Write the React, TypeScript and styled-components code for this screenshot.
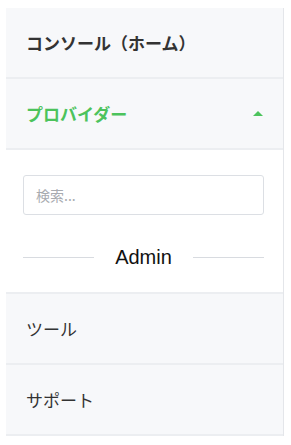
import styled, {createGlobalStyle} from 'styled-components'

const Global = createGlobalStyle`
  body {
    margin: 0;
    background: #fff;
    font-family: "Noto Sans", "Noto Sans CJK JP", sans-serif;
  }
`

const Panel = styled.nav`
  margin: 8px 0 0 6px;
  width: 277px;
  border-right: 1px solid #e4e6ea;
  background: #f7f8fa;
`

const Row = styled.div<{$active?: boolean; $bold?: boolean}>`
  height: 69px;
  display: flex;
  align-items: center;
  justify-content: space-between;
  padding: 0 20px;
  border-bottom: 2px solid #eceef1;
  font-size: 17px;
  font-weight: ${({$bold}) => ($bold ? 700 : 400)};
  color: ${({$active}) => ($active ? '#4cc35c' : '#333')};
  font-family: "Noto Sans CJK JP", sans-serif;
`

const Caret = styled.span`
  width: 0;
  height: 0;
  border-left: 5px solid transparent;
  border-right: 5px solid transparent;
  border-bottom: 5px solid #4cc35c;
`

const Dropdown = styled.div`
  background: #fff;
  padding: 25px 19px 0 17px;
  height: 117px;
  border-bottom: 2px solid #eceef1;
`

const Search = styled.input`
  box-sizing: border-box;
  width: 241px;
  height: 40px;
  border: 1px solid #dcdfe4;
  border-radius: 3px;
  padding: 0 12px;
  font-size: 14px;
  font-family: "Noto Sans CJK JP", sans-serif;
  color: #333;
  outline: none;
  &::placeholder {
    color: #a8abb0;
  }
`

const Divider = styled.div`
  display: flex;
  align-items: center;
  gap: 21px;
  width: 241px;
  margin-top: 31px;
  font-family: "Liberation Sans", sans-serif;
  font-size: 20px;
  line-height: 23px;
  color: #111;
  &::before,
  &::after {
    content: '';
    flex: 1;
    height: 1px;
    background: #d8dbe0;
  }
`

export default function App() {
  return (
    <>
      <Global />
      <Panel>
        <Row $bold>コンソール（ホーム）</Row>
        <Row $bold $active>
          プロバイダー
          <Caret />
        </Row>
        <Dropdown>
          <Search placeholder="検索..." />
          <Divider>Admin</Divider>
        </Dropdown>
        <Row>ツール</Row>
        <Row>サポート</Row>
      </Panel>
    </>
  )
}
